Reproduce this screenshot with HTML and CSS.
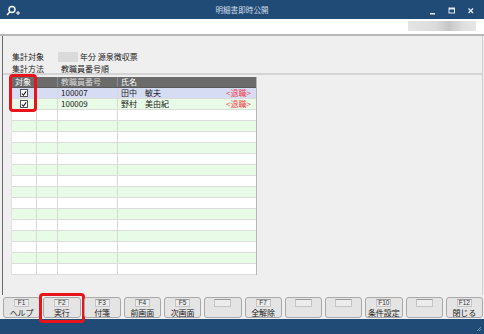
FILE: index.html
```html
<!DOCTYPE html>
<html lang="ja">
<head>
<meta charset="utf-8">
<link rel="stylesheet" href="styles.css">
</head>
<body>
<div class="window">
  <div class="titlebar">
    <svg class="app-icon" width="16" height="12" viewBox="0 0 16 12">
      <circle cx="7" cy="4.5" r="3" fill="none" stroke="#fff" stroke-width="1.4"/>
      <line x1="5" y1="6.8" x2="2" y2="10" stroke="#fff" stroke-width="1.6"/>
      <line x1="11" y1="8" x2="15" y2="8" stroke="#fff" stroke-width="1"/>
      <line x1="13" y1="6" x2="13" y2="10" stroke="#fff" stroke-width="1"/>
    </svg>
    <div class="title">明細書即時公開</div>
    <div class="controls">
      <svg width="8" height="8" viewBox="0 0 8 8"><rect x="1" y="6" width="5" height="1.5" fill="#e6ecf2"/></svg>
      <svg width="8" height="8" viewBox="0 0 8 8"><rect x="1" y="1" width="5.5" height="5" fill="none" stroke="#e6ecf2" stroke-width="1"/><rect x="1" y="1" width="5.5" height="1.5" fill="#e6ecf2"/></svg>
      <svg width="8" height="8" viewBox="0 0 8 8"><path d="M1.5 1.5 L6 6 M6 1.5 L1.5 6" stroke="#e6ecf2" stroke-width="1.4"/></svg>
    </div>
  </div>
  <div class="toolbar">
    <div class="user-blur"></div>
  </div>
  <div class="content">
    <div class="criteria">
      <div class="crit-row">
        <span class="crit-label">集計対象</span>
        <span class="year-box"></span>
        <span>年分 源泉徴収票</span>
      </div>
      <div class="crit-row">
        <span class="crit-label">集計方法</span>
        <span class="crit-value">教職員番号順</span>
      </div>
    </div>
    <div class="table-area">
      <div class="grid">
        <div class="row head">
          <div class="cell c1">対象</div>
          <div class="cell c2"></div>
          <div class="cell c3 dim">教職員番号</div>
          <div class="cell c4">氏名</div>
        </div>
        <div class="row sel">
          <div class="cell c1"><span class="chk"><svg width="7" height="7" viewBox="0 0 7 7"><path d="M1 3.5 L2.8 5.5 L6 1" fill="none" stroke="#111" stroke-width="1.2"/></svg></span></div>
          <div class="cell c2"></div>
          <div class="cell c3">100007</div>
          <div class="cell c4"><span>田中　敏夫</span><span class="ret">&lt;退職&gt;</span></div>
        </div>
        <div class="row green">
          <div class="cell c1"><span class="chk"><svg width="7" height="7" viewBox="0 0 7 7"><path d="M1 3.5 L2.8 5.5 L6 1" fill="none" stroke="#111" stroke-width="1.2"/></svg></span></div>
          <div class="cell c2"></div>
          <div class="cell c3">100009</div>
          <div class="cell c4"><span>野村　美由紀</span><span class="ret">&lt;退職&gt;</span></div>
        </div>
        <div class="row"><div class="cell c1"></div><div class="cell c2"></div><div class="cell c3"></div><div class="cell c4"></div></div>
        <div class="row green"><div class="cell c1"></div><div class="cell c2"></div><div class="cell c3"></div><div class="cell c4"></div></div>
        <div class="row"><div class="cell c1"></div><div class="cell c2"></div><div class="cell c3"></div><div class="cell c4"></div></div>
        <div class="row green"><div class="cell c1"></div><div class="cell c2"></div><div class="cell c3"></div><div class="cell c4"></div></div>
        <div class="row"><div class="cell c1"></div><div class="cell c2"></div><div class="cell c3"></div><div class="cell c4"></div></div>
        <div class="row green"><div class="cell c1"></div><div class="cell c2"></div><div class="cell c3"></div><div class="cell c4"></div></div>
        <div class="row"><div class="cell c1"></div><div class="cell c2"></div><div class="cell c3"></div><div class="cell c4"></div></div>
        <div class="row green"><div class="cell c1"></div><div class="cell c2"></div><div class="cell c3"></div><div class="cell c4"></div></div>
        <div class="row"><div class="cell c1"></div><div class="cell c2"></div><div class="cell c3"></div><div class="cell c4"></div></div>
        <div class="row green"><div class="cell c1"></div><div class="cell c2"></div><div class="cell c3"></div><div class="cell c4"></div></div>
        <div class="row"><div class="cell c1"></div><div class="cell c2"></div><div class="cell c3"></div><div class="cell c4"></div></div>
        <div class="row green"><div class="cell c1"></div><div class="cell c2"></div><div class="cell c3"></div><div class="cell c4"></div></div>
        <div class="row"><div class="cell c1"></div><div class="cell c2"></div><div class="cell c3"></div><div class="cell c4"></div></div>
        <div class="row green"><div class="cell c1"></div><div class="cell c2"></div><div class="cell c3"></div><div class="cell c4"></div></div>
        <div class="row"><div class="cell c1"></div><div class="cell c2"></div><div class="cell c3"></div><div class="cell c4"></div></div>
      </div>
      <div class="mark mark-col"></div>
    </div>
  </div>
  <div class="fkeys">
    <div class="fkey"><span class="fk">F1</span><span class="fl">ヘルプ</span></div>
    <div class="fkey"><span class="fk">F2</span><span class="fl">実行</span><div class="mark mark-btn"></div></div>
    <div class="fkey"><span class="fk">F3</span><span class="fl">付箋</span></div>
    <div class="fkey"><span class="fk">F4</span><span class="fl">前画面</span></div>
    <div class="fkey"><span class="fk">F5</span><span class="fl">次画面</span></div>
    <div class="fkey"><span class="fk"></span><span class="fl"></span></div>
    <div class="fkey"><span class="fk">F7</span><span class="fl">全解除</span></div>
    <div class="fkey"><span class="fk"></span><span class="fl"></span></div>
    <div class="fkey"><span class="fk"></span><span class="fl"></span></div>
    <div class="fkey"><span class="fk">F10</span><span class="fl">条件設定</span></div>
    <div class="fkey"><span class="fk"></span><span class="fl"></span></div>
    <div class="fkey"><span class="fk">F12</span><span class="fl">閉じる</span></div>
  </div>
  <div class="statusbar">
    <svg class="grip" width="6" height="6" viewBox="0 0 6 6"><path d="M5 1 L1 5 M5 3 L3 5" stroke="#8aa3bd" stroke-width="0.8"/></svg>
  </div>
</div>
</body>
</html>
```

FILE: styles.css
```css
* { box-sizing: border-box; }
html, body { margin: 0; padding: 0; }
body {
  width: 484px;
  height: 334px;
  overflow: hidden;
  font-family: "Noto Sans CJK JP", "Noto Sans", sans-serif;
  font-size: 8px;
  color: #222;
  background: #efefef;
}
.window {
  display: flex;
  flex-direction: column;
  height: 334px;
}
.titlebar {
  height: 19px;
  background: #1f4b76;
  display: flex;
  align-items: center;
  position: relative;
  flex: none;
}
.app-icon { margin-left: 5px; margin-top: 2px; }
.title {
  position: absolute;
  left: 0; right: 0;
  text-align: center;
  color: #d6dfea;
  font-size: 7.5px;
  letter-spacing: 0.1px;
  top: 5px;
  line-height: 9px;
}
.controls {
  margin-left: auto;
  margin-right: 9px;
  display: flex;
  gap: 11px;
  margin-top: 2px;
}
.toolbar {
  height: 17px;
  background: #fff;
  border-bottom: 2px solid #b8b8b8;
  flex: none;
  display: flex;
  justify-content: flex-end;
  align-items: flex-start;
  padding-top: 2px;
  padding-right: 8px;
}
.user-blur {
  width: 68px;
  height: 10px;
  background: linear-gradient(90deg, #e4e4e4 0%, #dcdcdc 40%, #c6c6c6 60%, #dedede 80%, #e6e6e6 100%);
}
.content {
  flex: 1;
  margin-left: 2px;
  margin-right: 1px;
  border-left: 1px solid #6a6a6a;
  border-right: 1px solid #cfcfcf;
  background: #efefef;
  display: flex;
  flex-direction: column;
}
.criteria {
  padding: 15px 0 0 9px;
  height: 39px;
  border-bottom: 2px solid #d4d4d4;
  flex: none;
}
.crit-row {
  display: flex;
  align-items: center;
  height: 12px;
  line-height: 12px;
  white-space: nowrap;
}
.crit-label { width: 46px; }
.year-box {
  width: 20px;
  height: 10px;
  background: #dadada;
  margin-right: 2px;
}
.crit-value { margin-left: 3px; }
.table-area {
  position: relative;
  padding: 2px 0 0 8px;
  flex: 1;
}
.grid {
  width: 246px;
  border-right: 1px solid #b5b5b5;
  border-left: 1px solid #e2e2e2;
}
.row {
  display: flex;
  height: 11px;
  border-bottom: 1px solid #dcdcdc;
  background: #fff;
}
.row.head {
  background: #6b6b6b;
  color: #fff;
  border-bottom: 1px solid #5a5a5a;
}
.row.sel { background: #d5dcf4; }
.row.green { background: #e8fbe6; }
.cell {
  height: 10px;
  line-height: 10px;
  border-right: 1px solid #d8d8d8;
  white-space: nowrap;
  overflow: hidden;
}
.head .cell { border-right-color: #8a8a8a; }
.c1 { width: 25px; display: flex; justify-content: center; align-items: center; }
.head .c1 { justify-content: flex-start; padding-left: 3px; }
.c2 { width: 21px; }
.c3 { width: 60px; padding-left: 3px; }
.c4 { flex: 1; border-right: none; padding-left: 3px; padding-right: 5px; display: flex; justify-content: space-between; }
.dim { color: #d8d8d8; }
.ret { color: #f0404a; }
.chk {
  width: 8px;
  height: 8px;
  background: #fff;
  border: 1px solid #555;
  display: flex;
  align-items: center;
  justify-content: center;
}
.chk svg { display: block; }
.mark {
  position: absolute;
  border: 3px solid #e8141c;
  border-radius: 4px;
  pointer-events: none;
}
.mark-col {
  left: 6px;
  top: -1px;
  width: 28px;
  height: 38px;
}
.fkeys {
  flex: none;
  height: 24px;
  display: flex;
  gap: 3px;
  padding: 2px 1px 1px 3px;
  background: #efefef;
}
.fkey {
  position: relative;
  flex: 1;
  height: 21px;
  background: #e4e4e4;
  border: 1px solid #a9a9a9;
  border-radius: 3px;
  display: flex;
  flex-direction: column;
  align-items: center;
}
.fk {
  margin-top: 1px;
  width: 15px;
  height: 8px;
  border: 1px solid #c4c4c4;
  border-top-color: #9a9a9a;
  background: #ececec;
  font-family: "Liberation Sans", Arial, sans-serif;
  font-size: 6.5px;
  line-height: 6px;
  text-align: center;
  color: #333;
}
.fk:empty { width: 17px; }
.fl {
  margin-top: 1px;
  font-size: 8px;
  line-height: 9px;
  height: 9px;
  color: #222;
  white-space: nowrap;
}
.mark-btn {
  left: -5px;
  top: -5px;
  width: 46px;
  height: 30px;
}
.statusbar {
  flex: none;
  height: 15px;
  background: #1f4b76;
  display: flex;
  justify-content: flex-end;
  align-items: flex-end;
  padding: 0 2px 2px 0;
}
.grip { display: block; }
```
